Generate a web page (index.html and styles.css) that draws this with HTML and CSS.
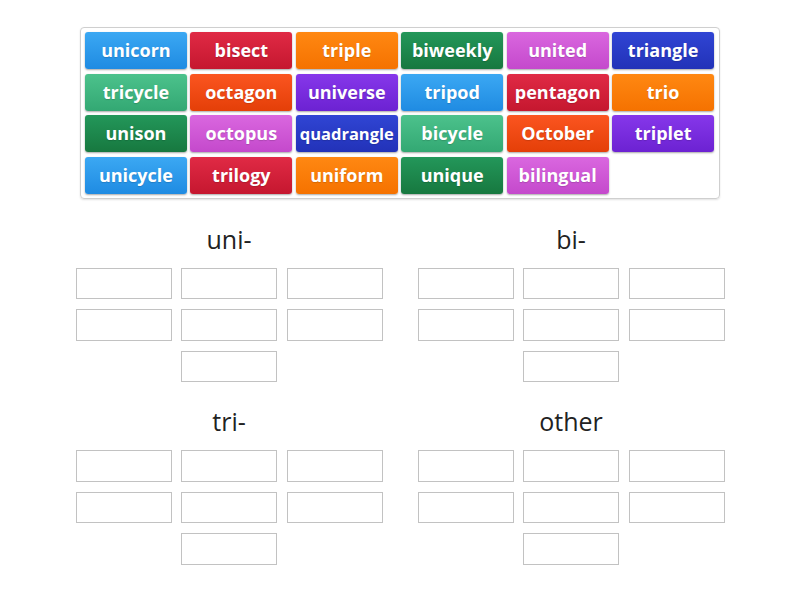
FILE: index.html
```html
<!DOCTYPE html>
<html>
<head>
<meta charset="utf-8">
<link rel="stylesheet" href="styles.css">
</head>
<body>
<div class="pool">
  <div class="tile blue">unicorn</div>
  <div class="tile red">bisect</div>
  <div class="tile orange">triple</div>
  <div class="tile green">biweekly</div>
  <div class="tile pink">united</div>
  <div class="tile indigo">triangle</div>
  <div class="tile teal">tricycle</div>
  <div class="tile vermilion">octagon</div>
  <div class="tile purple">universe</div>
  <div class="tile blue">tripod</div>
  <div class="tile red">pentagon</div>
  <div class="tile orange">trio</div>
  <div class="tile green">unison</div>
  <div class="tile pink">octopus</div>
  <div class="tile indigo small">quadrangle</div>
  <div class="tile teal">bicycle</div>
  <div class="tile vermilion">October</div>
  <div class="tile purple">triplet</div>
  <div class="tile blue">unicycle</div>
  <div class="tile red">trilogy</div>
  <div class="tile orange">uniform</div>
  <div class="tile green">unique</div>
  <div class="tile pink">bilingual</div>
</div>
<div class="groups">
  <div class="group">
    <div class="label">uni-</div>
    <div class="slots"><div class="slot"></div><div class="slot"></div><div class="slot"></div><div class="slot"></div><div class="slot"></div><div class="slot"></div><div class="slot"></div></div>
  </div>
  <div class="group">
    <div class="label">bi-</div>
    <div class="slots"><div class="slot"></div><div class="slot"></div><div class="slot"></div><div class="slot"></div><div class="slot"></div><div class="slot"></div><div class="slot"></div></div>
  </div>
  <div class="group">
    <div class="label">tri-</div>
    <div class="slots"><div class="slot"></div><div class="slot"></div><div class="slot"></div><div class="slot"></div><div class="slot"></div><div class="slot"></div><div class="slot"></div></div>
  </div>
  <div class="group">
    <div class="label">other</div>
    <div class="slots"><div class="slot"></div><div class="slot"></div><div class="slot"></div><div class="slot"></div><div class="slot"></div><div class="slot"></div><div class="slot"></div></div>
  </div>
</div>
</body>
</html>
```

FILE: styles.css
```css
html, body {
  margin: 0;
  padding: 0;
  background: #ffffff;
}
body {
  font-family: "Open Sans", "Noto Sans", sans-serif;
  width: 800px;
  height: 600px;
  overflow: hidden;
}
.pool {
  box-sizing: border-box;
  width: 640px;
  margin: 27px 0 0 80px;
  border: 1px solid #cfcfcf;
  border-radius: 4px;
  box-shadow: 0 1px 2px rgba(0, 0, 0, 0.12);
  padding: 4px 5px 4px 4px;
  display: grid;
  grid-template-columns: repeat(6, 1fr);
  grid-auto-rows: 37px;
  column-gap: 3.6px;
  row-gap: 4.5px;
}
.tile {
  border-radius: 3px;
  color: #ffffff;
  font-weight: 700;
  font-size: 18px;
  display: flex;
  align-items: center;
  justify-content: center;
  white-space: nowrap;
  padding-bottom: 1px;
  text-shadow: 0 1px 1px rgba(0, 0, 0, 0.15);
  box-shadow: 0 1px 2px rgba(0, 0, 0, 0.35);
}
.tile.small {
  font-size: 16.5px;
}
.blue { background: linear-gradient(#3ba8f3, #1f8be2); }
.red { background: linear-gradient(#e02a45, #c5172f); }
.orange { background: linear-gradient(#ff8812, #f57200); }
.green { background: linear-gradient(#23975a, #17783f); }
.pink { background: linear-gradient(#da67df, #c449cc); }
.indigo { background: linear-gradient(#3045d4, #2232b8); }
.teal { background: linear-gradient(#4cc28c, #33a873); }
.vermilion { background: linear-gradient(#fb5520, #e43f08); }
.purple { background: linear-gradient(#8637ea, #6c22d2); }

.groups {
  width: 684px;
  margin: 23px 0 0 58px;
  display: grid;
  grid-template-columns: 342px 342px;
  row-gap: 22px;
}
.group {
  display: flex;
  flex-direction: column;
  align-items: center;
}
.label {
  font-size: 25px;
  color: #222222;
  line-height: 34px;
  height: 34px;
  margin-bottom: 12px;
}
.slots {
  width: 307px;
  display: flex;
  flex-wrap: wrap;
  justify-content: center;
  column-gap: 9.5px;
  row-gap: 10px;
}
.slot {
  box-sizing: border-box;
  width: 96px;
  height: 31.5px;
  border: 1px solid #c2c2c2;
  background: #ffffff;
}
```
